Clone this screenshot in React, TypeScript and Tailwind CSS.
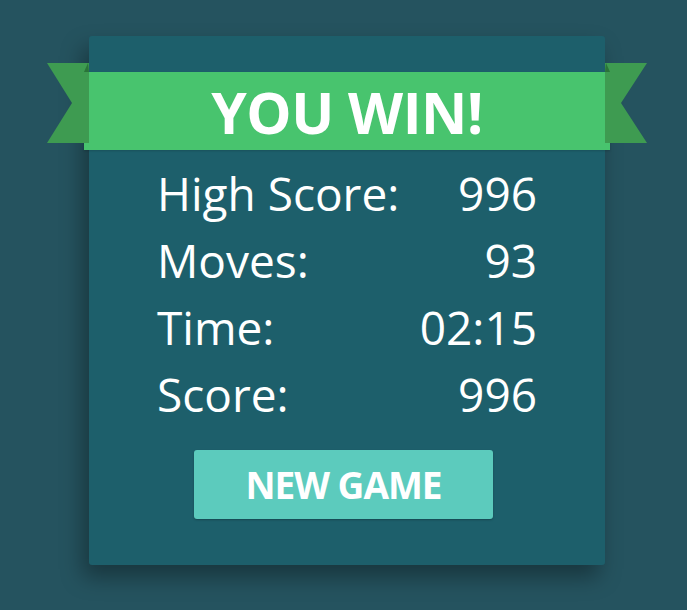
const stats = [
  { label: "High Score:", value: "996" },
  { label: "Moves:", value: "93" },
  { label: "Time:", value: "02:15" },
  { label: "Score:", value: "996" },
];

function Tail({ side }: { side: "left" | "right" }) {
  if (side === "left") {
    return (
      <svg
        className="absolute left-[-37px] top-[-9px]"
        width="42"
        height="80"
        viewBox="0 0 42 80"
      >
        <polygon points="0,0 42,0 42,80 0,80 25,40" fill="#3e9b51" />
        <polygon points="41,0 37,9 42,9" fill="#2a7439" />
      </svg>
    );
  }
  return (
    <svg
      className="absolute right-[-37px] top-[-9px]"
      width="42"
      height="80"
      viewBox="0 0 42 80"
    >
      <polygon points="0,0 42,0 16,40 42,80 0,80" fill="#3e9b51" />
      <polygon points="1,0 5,9 0,9" fill="#2a7439" />
    </svg>
  );
}

export default function App() {
  return (
    <div
      className="w-full h-[610px] bg-[#25535f] pt-[36px] pl-[89px] overflow-hidden"
      style={{ fontFamily: '"Open Sans", "Noto Sans", sans-serif' }}
    >
      <div className="w-[516px] h-[529px] rounded-[3px] bg-[#1d5f6b] shadow-[-6px_12px_22px_rgba(0,0,0,0.35)] pt-[36px]">
        <div className="relative mx-[-5px] h-[78px] bg-[#48c46e] shadow-[0_1px_2px_rgba(0,0,0,0.15)] flex items-center justify-center">
          <Tail side="left" />
          <Tail side="right" />
          <span className="relative text-white font-bold text-[57px] leading-none tracking-[-0.5px] pt-[2px]">
            YOU WIN!
          </span>
        </div>

        <div className="px-[68px] pt-[10px] text-white">
          {stats.map((s) => (
            <div
              key={s.label}
              className="flex justify-between text-[46px] leading-[67px]"
            >
              <span>{s.label}</span>
              <span>{s.value}</span>
            </div>
          ))}
        </div>

        <button className="mt-[22px] ml-[105px] w-[299px] h-[69px] rounded-[3px] bg-[#5ccbbd] shadow-[0_1px_2px_rgba(0,0,0,0.25)] text-white font-bold text-[37px] tracking-[-1px] flex items-center justify-center">
          NEW GAME
        </button>
      </div>
    </div>
  );
}
